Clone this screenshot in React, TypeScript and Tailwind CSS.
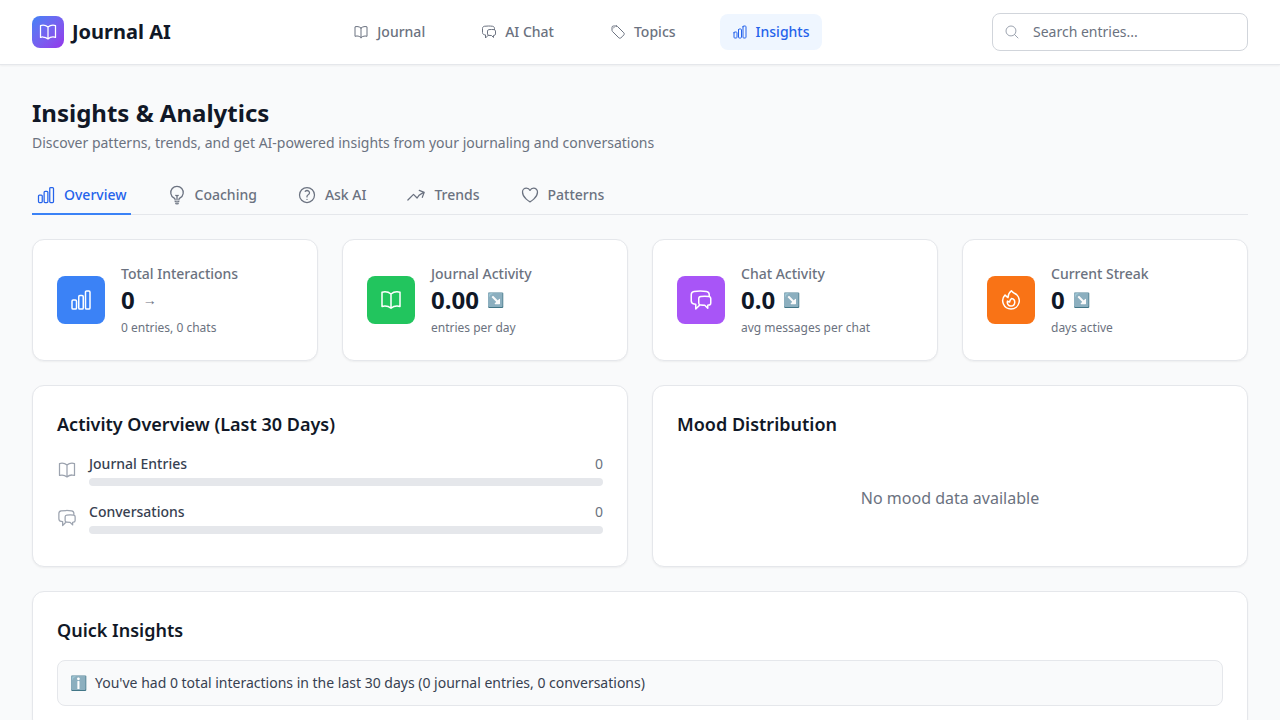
import type { ComponentType } from 'react'
import {
  HiOutlineArrowTrendingUp,
  HiOutlineBookOpen,
  HiOutlineChartBar,
  HiOutlineChatBubbleLeftRight,
  HiOutlineFire,
  HiOutlineHeart,
  HiOutlineLightBulb,
  HiOutlineMagnifyingGlass,
  HiOutlineQuestionMarkCircle,
  HiOutlineTag,
} from 'react-icons/hi2'

type Icon = ComponentType<{ className?: string }>

const navItems: { label: string; icon: Icon; active?: boolean }[] = [
  { label: 'Journal', icon: HiOutlineBookOpen },
  { label: 'AI Chat', icon: HiOutlineChatBubbleLeftRight },
  { label: 'Topics', icon: HiOutlineTag },
  { label: 'Insights', icon: HiOutlineChartBar, active: true },
]

const tabs: { label: string; icon: Icon; active?: boolean }[] = [
  { label: 'Overview', icon: HiOutlineChartBar, active: true },
  { label: 'Coaching', icon: HiOutlineLightBulb },
  { label: 'Ask AI', icon: HiOutlineQuestionMarkCircle },
  { label: 'Trends', icon: HiOutlineArrowTrendingUp },
  { label: 'Patterns', icon: HiOutlineHeart },
]

const stats: { title: string; value: string; trend: string; sub: string; icon: Icon; color: string }[] = [
  { title: 'Total Interactions', value: '0', trend: '→', sub: '0 entries, 0 chats', icon: HiOutlineChartBar, color: 'bg-[#3b82f6]' },
  { title: 'Journal Activity', value: '0.00', trend: '↘️', sub: 'entries per day', icon: HiOutlineBookOpen, color: 'bg-[#22c55e]' },
  { title: 'Chat Activity', value: '0.0', trend: '↘️', sub: 'avg messages per chat', icon: HiOutlineChatBubbleLeftRight, color: 'bg-[#a855f7]' },
  { title: 'Current Streak', value: '0', trend: '↘️', sub: 'days active', icon: HiOutlineFire, color: 'bg-[#f97316]' },
]

const activity: { label: string; icon: Icon }[] = [
  { label: 'Journal Entries', icon: HiOutlineBookOpen },
  { label: 'Conversations', icon: HiOutlineChatBubbleLeftRight },
]

const cardClass = 'bg-white rounded-xl border border-[#e5e7eb] shadow-[0_1px_2px_0_rgba(0,0,0,0.05)] p-6'

export default function App() {
  return (
    <div className="h-[720px] overflow-hidden bg-[#f9fafb] font-['Noto_Sans',sans-serif] text-[#111827]">
      {/* Header */}
      <header className="bg-white shadow-[0_1px_2px_0_rgba(0,0,0,0.05)] border-b border-[#e5e7eb] h-[65px] px-8 flex items-center justify-between">
        <div className="flex items-center gap-2">
          <div className="w-8 h-8 rounded-lg bg-gradient-to-br from-[#3b82f6] to-[#9333ea] flex items-center justify-center">
            <HiOutlineBookOpen className="w-5 h-5 text-white" />
          </div>
          <span className="text-xl font-bold">Journal AI</span>
        </div>

        <nav className="flex items-center gap-8">
          {navItems.map((item) => (
            <div
              key={item.label}
              className={`flex items-center gap-2 px-3 py-2 rounded-lg text-sm font-medium ${
                item.active ? 'bg-[#eff6ff] text-[#2563eb]' : 'text-[#6b7280]'
              }`}
            >
              <item.icon className="w-4 h-4" />
              {item.label}
            </div>
          ))}
        </nav>

        <div className="relative w-[256px]">
          <HiOutlineMagnifyingGlass className="absolute left-3 top-[11px] w-4 h-4 text-[#9ca3af]" />
          <input
            type="text"
            placeholder="Search entries..."
            className="w-full h-[38px] pl-10 pr-4 pb-0.5 rounded-lg border border-[#d1d5db] bg-white text-sm placeholder:text-[#6b7280]"
          />
        </div>
      </header>

      <main className="p-8">
        <h1 className="text-2xl font-bold">Insights &amp; Analytics</h1>
        <p className="text-sm text-[#6b7280] mt-1">
          Discover patterns, trends, and get AI-powered insights from your journaling and conversations
        </p>

        {/* Tabs */}
        <div className="flex gap-8 border-b border-[#e5e7eb] mt-6">
          {tabs.map((tab) => (
            <div
              key={tab.label}
              className={`flex items-center gap-2 px-1 py-2 -mb-px border-b-2 text-sm font-medium ${
                tab.active ? 'border-[#3b82f6] text-[#2563eb]' : 'border-transparent text-[#6b7280]'
              }`}
            >
              <tab.icon className="w-5 h-5" />
              {tab.label}
            </div>
          ))}
        </div>

        {/* Stat cards */}
        <div className="grid grid-cols-4 gap-6 mt-6">
          {stats.map((stat) => (
            <div key={stat.title} className={`${cardClass} flex items-center gap-4`}>
              <div className={`w-12 h-12 rounded-lg flex items-center justify-center ${stat.color}`}>
                <stat.icon className="w-6 h-6 text-white" />
              </div>
              <div>
                <p className="text-sm font-medium text-[#6b7280]">{stat.title}</p>
                <div className="flex items-center gap-2">
                  <span className="text-2xl font-bold">{stat.value}</span>
                  <span className="text-sm text-[#6b7280]">{stat.trend}</span>
                </div>
                <p className="text-xs text-[#6b7280] mt-1">{stat.sub}</p>
              </div>
            </div>
          ))}
        </div>

        <div className="grid grid-cols-2 gap-6 mt-6">
          <div className={cardClass}>
            <h3 className="text-lg font-semibold mb-4">Activity Overview (Last 30 Days)</h3>
            <div className="space-y-4">
              {activity.map((row) => (
                <div key={row.label} className="flex items-center gap-3">
                  <row.icon className="w-5 h-5 text-[#9ca3af]" />
                  <div className="flex-1">
                    <div className="flex justify-between text-sm">
                      <span className="font-medium text-[#374151]">{row.label}</span>
                      <span className="text-[#6b7280]">0</span>
                    </div>
                    <div className="h-2 rounded-full bg-[#e5e7eb] mt-1" />
                  </div>
                </div>
              ))}
            </div>
          </div>

          <div className={cardClass}>
            <h3 className="text-lg font-semibold mb-4">Mood Distribution</h3>
            <div className="py-8 text-center text-[#6b7280]">No mood data available</div>
          </div>
        </div>

        <div className={`${cardClass} mt-6`}>
          <h3 className="text-lg font-semibold mb-4">Quick Insights</h3>
          <div className="flex items-center gap-2 bg-[#f9fafb] border border-[#e5e7eb] rounded-lg p-3 text-sm text-[#374151]">
            <span>ℹ️</span>
            <span>You've had 0 total interactions in the last 30 days (0 journal entries, 0 conversations)</span>
          </div>
        </div>
      </main>
    </div>
  )
}
